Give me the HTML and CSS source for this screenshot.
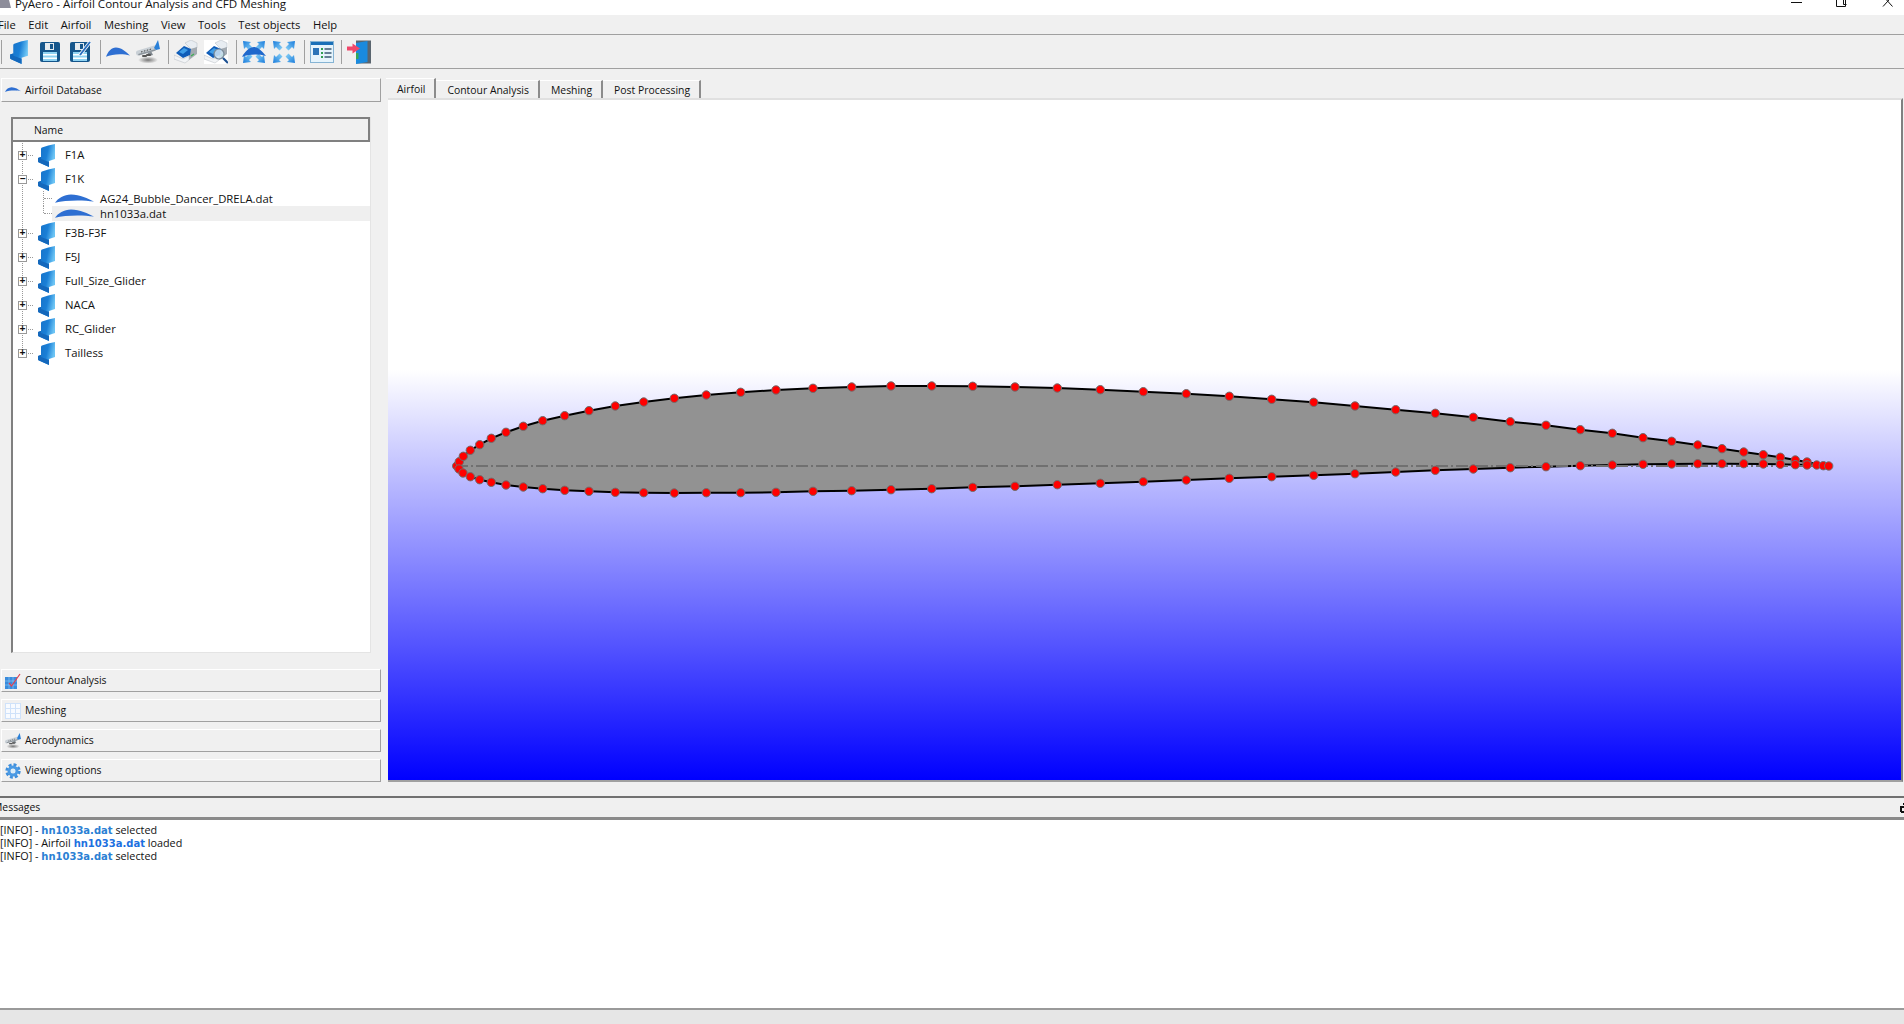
FILE: index.html
```html
<!DOCTYPE html>
<html>
<head>
    <title>PyAero - Airfoil Contour Analysis and CFD Meshing</title>
    <link rel="stylesheet" href="styles.css">
</head>
<body>
    <!-- icons used more than once -->
    <svg class="sprites">
        <defs>
            <linearGradient id="folderBlue" x1="0" x2="1" y1="0" y2="0.3">
                <stop offset="0" stop-color="#1670c6"/>
                <stop offset="0.6" stop-color="#1a7fd6"/>
                <stop offset="1" stop-color="#6cc4f4"/>
            </linearGradient>
            <linearGradient id="arrowBlue" x1="0" x2="1" y1="0" y2="1">
                <stop offset="0" stop-color="#1a7cdc"/>
                <stop offset="1" stop-color="#8fd6f8"/>
            </linearGradient>
            <radialGradient id="planeShadow">
                <stop offset="0" stop-color="#777"/>
                <stop offset="1" stop-color="#777" stop-opacity="0"/>
            </radialGradient>
            <symbol id="i-folder" viewBox="0 0 17 23">
                <path d="M0 14 L3 13 V5 Q3 4 4 3.6 Q10 1 17 0 V15 Q14 16 11 17 V23 L1 18.5 Q0 18 0 17Z" fill="url(#folderBlue)"/>
                <path d="M0 14 L3 13 V15 L11 18 V23 L1 18.5 Q0 18 0 17Z" fill="#1468bc"/>
            </symbol>
            <symbol id="i-airfoil" viewBox="0 0 39 9" preserveAspectRatio="none">
                <path d="M0 8.8 C3 4 9 0.5 16 0.4 C25 0.4 33 4.5 39 7.6 C28 5.8 10 6 0 8.8Z" fill="#2e6fd2"/>
            </symbol>
            <symbol id="i-floppy" viewBox="-2 -2 24 24">
                <rect x="0" y="0" width="20" height="20" rx="2" fill="#15568c"/>
                <rect x="5" y="1" width="9" height="7" fill="#e4ebf0"/>
                <rect x="10" y="2" width="3" height="5" fill="#15568c"/>
                <rect x="3" y="10" width="14" height="9" fill="#8ed2f2"/>
                <rect x="3" y="12" width="14" height="1.5" fill="#fff"/>
                <rect x="3" y="15.5" width="14" height="1.5" fill="#fff"/>
            </symbol>
            <symbol id="i-plane" viewBox="0 0 24 24">
                <ellipse cx="12" cy="20" rx="10" ry="3.5" fill="url(#planeShadow)"/>
                <path d="M10 10 L14 9 L17 15 L13 16Z" fill="#7f878e"/>
                <path d="M2.5 13 L19 8" stroke="#c9d0d6" stroke-width="5" stroke-linecap="round"/>
                <path d="M3 14.5 L19 10" stroke="#8d959c" stroke-width="1.5" stroke-linecap="round"/>
                <path d="M18 8 L22 0 L24 9 L20 10Z" fill="#2a80d8"/>
                <path d="M5 12 L16 8.8" stroke="#444" stroke-width="1" stroke-dasharray="1.5 1.5"/>
                <path d="M7 16 h3 M11 15 h3" stroke="#555" stroke-width="2" stroke-linecap="round"/>
            </symbol>
            <symbol id="i-printer" viewBox="0 0 24 24">
                <path d="M11 3 L17 0 L23 3 V8 L17 9Z" fill="#e8edf2" stroke="#b0b8c0" stroke-width="0.5"/>
                <path d="M17 9 L23 7 V14 L15 20 V15Z" fill="#a4abb2"/>
                <path d="M2 13 L10 6 L17 9 L16 15 L9 18Z" fill="#0f5cb8"/>
                <path d="M5 12 L10 8 L14 10 L9 14Z" fill="#3f9ee8"/>
                <path d="M0 15 L9 19 L15 16 V20 L11 23 L0 19Z" fill="#f2f4f6" stroke="#b4bac0" stroke-width="0.5"/>
                <path d="M17 16 l3 -2" stroke="#3cae50" stroke-width="1.2"/>
            </symbol>
            <symbol id="i-fit" viewBox="0 0 24 24">
                <path id="fit-arrow" d="M1 1 L9 2 L7 4 L10.5 7.5 L7.5 10.5 L4 7 L2 9Z" fill="url(#arrowBlue)"/>
                <use href="#fit-arrow" transform="matrix(-1 0 0 1 24 0)"/>
                <use href="#fit-arrow" transform="matrix(1 0 0 -1 0 24)"/>
                <use href="#fit-arrow" transform="matrix(-1 0 0 -1 24 24)"/>
            </symbol>
        </defs>
    </svg>

    <div class="titlebar">
        <svg class="app-icon" viewBox="0 0 11 15"><path d="M0 0 H9 L11 8 H0Z" fill="#8d8d9a"/></svg>
        <span class="title">PyAero - Airfoil Contour Analysis and CFD Meshing</span>
        <svg class="win-buttons" viewBox="0 0 114 15">
            <path d="M1 2.5 H12 M46.5 0 V6.5 H55.5 V0 M53.5 0 V4.5 H56.5 M93 -4 L102.5 6.5 M102.5 -4 L93 6.5" fill="none" stroke="#111" stroke-width="1"/>
        </svg>
    </div>

    <div class="menubar">
        <span>File</span>
        <span>Edit</span>
        <span>Airfoil</span>
        <span>Meshing</span>
        <span>View</span>
        <span>Tools</span>
        <span>Test objects</span>
        <span>Help</span>
    </div>

    <div class="toolbar">
        <i class="tb-sep tb-first"></i>
        <svg class="tool"><use href="#i-folder"/></svg>
        <svg class="tool"><use href="#i-floppy"/></svg>
        <svg class="tool" viewBox="0 0 24 24">
            <use href="#i-floppy" width="24" height="24"/>
            <path d="M12 15 L22 2" stroke="#fff" stroke-width="3.5"/>
            <path d="M12 15 L22 2" stroke="#2a6fc0" stroke-width="2"/>
        </svg>
        <i class="tb-sep"></i>
        <svg class="tool-foil"><use href="#i-airfoil"/></svg>
        <svg class="tool"><use href="#i-plane"/></svg>
        <i class="tb-sep"></i>
        <svg class="tool"><use href="#i-printer"/></svg>
        <svg class="tool" viewBox="0 0 24 24">
            <rect width="24" height="24" fill="#fff"/>
            <use href="#i-printer" width="24" height="24"/>
            <circle cx="15" cy="14" r="5" fill="#cfe4f4" fill-opacity="0.85" stroke="#7a8b9a" stroke-width="1.2"/>
            <path d="M19 18 L24 23" stroke="#1b4f90" stroke-width="2.2"/>
        </svg>
        <i class="tb-sep"></i>
        <svg class="tool" viewBox="0 0 24 24">
            <use href="#i-fit" width="24" height="24"/>
            <path d="M0 17 C3 11 8 7 12 7 C16 7 20 11 24 16 C16 14 8 14 0 17Z" fill="#1f68cc"/>
        </svg>
        <svg class="tool"><use href="#i-fit"/></svg>
        <i class="tb-sep"></i>
        <svg class="tool" viewBox="0 0 24 24">
            <rect x="0.5" y="1.5" width="23" height="21" fill="#e6f4fc" stroke="#86b4d4"/>
            <rect x="1" y="2" width="22" height="3" fill="#1a70b8"/>
            <rect x="3" y="8" width="6" height="7" fill="#2c74b8"/>
            <path d="M11 9 h2 M11 13 h2 M11 17 h2" stroke="#2f9e50" stroke-width="2"/>
            <path d="M14.5 9 h7 M14.5 13 h7 M14.5 17 h7" stroke="#3d5a76" stroke-width="1.4"/>
        </svg>
        <i class="tb-sep"></i>
        <svg class="tool" viewBox="0 0 24 24">
            <rect x="9" y="0.5" width="15" height="23" fill="#5a656f"/>
            <path d="M9 3 L20.5 1 V22 L9 24Z" fill="#1a8ade"/>
            <path d="M9 13 h2.5 v6 h-2.5Z" fill="#36a856"/>
            <path d="M0 6.5 H5.5 V3.5 L13 8.5 L5.5 13.5 V10.5 H0Z" fill="#f0476a"/>
        </svg>
    </div>

    <div class="main">
        <div class="sidebar">
            <div class="panel-head panel-first">
                <svg class="panel-foil"><use href="#i-airfoil"/></svg>
                <span>Airfoil Database</span>
            </div>

            <div class="tree">
                <div class="tree-head">Name</div>
                <div class="folder">
                    <i class="exp">+</i><i class="stub"></i>
                    <svg class="folder-icon"><use href="#i-folder"/></svg>
                    <span>F1A</span>
                </div>
                <div class="folder">
                    <i class="exp">&minus;</i><i class="stub"></i>
                    <svg class="folder-icon"><use href="#i-folder"/></svg>
                    <span>F1K</span>
                </div>
                <div class="child-group">
                    <div class="child">
                        <i class="child-stub"></i>
                        <div class="child-cell">
                            <svg class="child-icon"><use href="#i-airfoil"/></svg>
                            <span>AG24_Bubble_Dancer_DRELA.dat</span>
                        </div>
                    </div>
                    <div class="child child-end">
                        <i class="child-stub"></i>
                        <div class="child-cell selected">
                            <svg class="child-icon"><use href="#i-airfoil"/></svg>
                            <span>hn1033a.dat</span>
                        </div>
                    </div>
                </div>
                <div class="folder">
                    <i class="exp">+</i><i class="stub"></i>
                    <svg class="folder-icon"><use href="#i-folder"/></svg>
                    <span>F3B-F3F</span>
                </div>
                <div class="folder">
                    <i class="exp">+</i><i class="stub"></i>
                    <svg class="folder-icon"><use href="#i-folder"/></svg>
                    <span>F5J</span>
                </div>
                <div class="folder">
                    <i class="exp">+</i><i class="stub"></i>
                    <svg class="folder-icon"><use href="#i-folder"/></svg>
                    <span>Full_Size_Glider</span>
                </div>
                <div class="folder">
                    <i class="exp">+</i><i class="stub"></i>
                    <svg class="folder-icon"><use href="#i-folder"/></svg>
                    <span>NACA</span>
                </div>
                <div class="folder">
                    <i class="exp">+</i><i class="stub"></i>
                    <svg class="folder-icon"><use href="#i-folder"/></svg>
                    <span>RC_Glider</span>
                </div>
                <div class="folder folder-end">
                    <i class="exp">+</i><i class="stub"></i>
                    <svg class="folder-icon"><use href="#i-folder"/></svg>
                    <span>Tailless</span>
                </div>
            </div>

            <div class="panel-list">
                <div class="panel-head">
                    <svg class="panel-icon" viewBox="0 0 16 16">
                        <rect x="0" y="4" width="12" height="12" fill="#3a8cdc"/>
                        <path d="M0 8 h12 M0 12 h12 M4 4 v12 M8 4 v12" stroke="#8ec4f2" stroke-width="0.7"/>
                        <path d="M4 10 L6.5 13 L15 1" fill="none" stroke="#e04050" stroke-width="1.2"/>
                    </svg>
                    <span>Contour Analysis</span>
                </div>
                <div class="panel-head">
                    <svg class="panel-icon" viewBox="0 0 16 16">
                        <rect width="16" height="16" fill="#f8fbff"/>
                        <path d="M0 .5 h16 M0 5.5 h16 M0 10.5 h16 M0 15.5 h16 M.5 0 v16 M5.5 0 v16 M10.5 0 v16 M15.5 0 v16" stroke="#cfe2fa" stroke-width="1"/>
                    </svg>
                    <span>Meshing</span>
                </div>
                <div class="panel-head">
                    <svg class="panel-icon"><use href="#i-plane"/></svg>
                    <span>Aerodynamics</span>
                </div>
                <div class="panel-head">
                    <svg class="panel-icon" viewBox="0 0 24 24">
                        <circle cx="12" cy="12" r="9.5" fill="none" stroke="#3f8fdc" stroke-width="4" stroke-dasharray="4.4 3"/>
                        <circle cx="12" cy="12" r="6" fill="none" stroke="#4a9ae4" stroke-width="4.5"/>
                        <circle cx="12" cy="12" r="3" fill="#d8ecfa"/>
                    </svg>
                    <span>Viewing options</span>
                </div>
            </div>
        </div>

        <div class="workspace">
            <div class="tabs">
                <span class="tab tab-active">Airfoil</span>
                <span class="tab">Contour Analysis</span>
                <span class="tab">Meshing</span>
                <span class="tab">Post Processing</span>
            </div>
            <div class="view">
                <svg class="canvas" viewBox="388 100 1513 680">
                    <path class="contour" d="M456.7 466 459.3 461.7 463.3 456.3 470.3 450.3 479.7 444.7 491.3 438.3 506 432.3 523.3 426.3 542.7 420.7 564.7 415.7 589 410.7 615.3 406 643.7 402 674.3 398.3 706.3 395 740.7 392.3 776 390 813 388.3 851.7 387 891 386 931.7 386 972.7 386.3 1015 387 1057.3 388 1100.3 389.7 1143.3 391.7 1186.3 393.7 1229.3 396.3 1271.7 399.3 1313.7 402.3 1355 406 1395.7 409.7 1435.3 413.3 1473.3 417.3 1510.3 421.7 1546 425.3 1580.3 429.7 1612.3 433.3 1643 437.7 1671.7 441.3 1697.7 445 1722 448.7 1743.7 452 1763.3 454.7 1780.3 457.3 1795.3 460 1807 462 1816.7 464 1823.3 465.3 1828.7 466 1807 465 1795.3 464.7 1780.3 464.3 1763.3 464 1722 463.7 1697.7 463.7 1671.7 464 1643 464.3 1612.3 465 1580.3 465.7 1546 466.7 1510.3 467.7 1473.3 469 1435.3 470.3 1395.7 472 1355 473.7 1313.7 475.3 1271.7 476.7 1229.3 478.3 1186.3 480 1143.3 481.7 1100.3 483.3 1057.3 484.7 1015 486.3 972.7 487.3 931.7 488.7 891 489.7 851.7 490.7 813 491.3 776 492.3 740.7 492.7 706.3 492.7 674.3 493 643.7 492.7 615.3 492.3 589 491.3 564.7 490.3 542.7 488.7 523.3 487 506 485 491.3 482.3 479.7 479.7 470.3 476.7 463 473 459 469Z"/>
                    <path class="chord" d="M456 466 H1826"/>
                    <g class="points">
                        <circle cx="456.7" cy="466" r="3.9"/><circle cx="459.3" cy="461.7" r="3.9"/><circle cx="463.3" cy="456.3" r="3.9"/><circle cx="470.3" cy="450.3" r="3.9"/>
                        <circle cx="479.7" cy="444.7" r="3.9"/><circle cx="491.3" cy="438.3" r="3.9"/><circle cx="506" cy="432.3" r="3.9"/><circle cx="523.3" cy="426.3" r="3.9"/>
                        <circle cx="542.7" cy="420.7" r="3.9"/><circle cx="564.7" cy="415.7" r="3.9"/><circle cx="589" cy="410.7" r="3.9"/><circle cx="615.3" cy="406" r="3.9"/>
                        <circle cx="643.7" cy="402" r="3.9"/><circle cx="674.3" cy="398.3" r="3.9"/><circle cx="706.3" cy="395" r="3.9"/><circle cx="740.7" cy="392.3" r="3.9"/>
                        <circle cx="776" cy="390" r="3.9"/><circle cx="813" cy="388.3" r="3.9"/><circle cx="851.7" cy="387" r="3.9"/><circle cx="891" cy="386" r="3.9"/>
                        <circle cx="931.7" cy="386" r="3.9"/><circle cx="972.7" cy="386.3" r="3.9"/><circle cx="1015" cy="387" r="3.9"/><circle cx="1057.3" cy="388" r="3.9"/>
                        <circle cx="1100.3" cy="389.7" r="3.9"/><circle cx="1143.3" cy="391.7" r="3.9"/><circle cx="1186.3" cy="393.7" r="3.9"/><circle cx="1229.3" cy="396.3" r="3.9"/>
                        <circle cx="1271.7" cy="399.3" r="3.9"/><circle cx="1313.7" cy="402.3" r="3.9"/><circle cx="1355" cy="406" r="3.9"/><circle cx="1395.7" cy="409.7" r="3.9"/>
                        <circle cx="1435.3" cy="413.3" r="3.9"/><circle cx="1473.3" cy="417.3" r="3.9"/><circle cx="1510.3" cy="421.7" r="3.9"/><circle cx="1546" cy="425.3" r="3.9"/>
                        <circle cx="1580.3" cy="429.7" r="3.9"/><circle cx="1612.3" cy="433.3" r="3.9"/><circle cx="1643" cy="437.7" r="3.9"/><circle cx="1671.7" cy="441.3" r="3.9"/>
                        <circle cx="1697.7" cy="445" r="3.9"/><circle cx="1722" cy="448.7" r="3.9"/><circle cx="1743.7" cy="452" r="3.9"/><circle cx="1763.3" cy="454.7" r="3.9"/>
                        <circle cx="1780.3" cy="457.3" r="3.9"/><circle cx="1795.3" cy="460" r="3.9"/><circle cx="1807" cy="462" r="3.9"/>
                        <circle cx="459" cy="469" r="3.9"/><circle cx="463" cy="473" r="3.9"/><circle cx="470.3" cy="476.7" r="3.9"/><circle cx="479.7" cy="479.7" r="3.9"/>
                        <circle cx="491.3" cy="482.3" r="3.9"/><circle cx="506" cy="485" r="3.9"/><circle cx="523.3" cy="487" r="3.9"/><circle cx="542.7" cy="488.7" r="3.9"/>
                        <circle cx="564.7" cy="490.3" r="3.9"/><circle cx="589" cy="491.3" r="3.9"/><circle cx="615.3" cy="492.3" r="3.9"/><circle cx="643.7" cy="492.7" r="3.9"/>
                        <circle cx="674.3" cy="493" r="3.9"/><circle cx="706.3" cy="492.7" r="3.9"/><circle cx="740.7" cy="492.7" r="3.9"/><circle cx="776" cy="492.3" r="3.9"/>
                        <circle cx="813" cy="491.3" r="3.9"/><circle cx="851.7" cy="490.7" r="3.9"/><circle cx="891" cy="489.7" r="3.9"/><circle cx="931.7" cy="488.7" r="3.9"/>
                        <circle cx="972.7" cy="487.3" r="3.9"/><circle cx="1015" cy="486.3" r="3.9"/><circle cx="1057.3" cy="484.7" r="3.9"/><circle cx="1100.3" cy="483.3" r="3.9"/>
                        <circle cx="1143.3" cy="481.7" r="3.9"/><circle cx="1186.3" cy="480" r="3.9"/><circle cx="1229.3" cy="478.3" r="3.9"/><circle cx="1271.7" cy="476.7" r="3.9"/>
                        <circle cx="1313.7" cy="475.3" r="3.9"/><circle cx="1355" cy="473.7" r="3.9"/><circle cx="1395.7" cy="472" r="3.9"/><circle cx="1435.3" cy="470.3" r="3.9"/>
                        <circle cx="1473.3" cy="469" r="3.9"/><circle cx="1510.3" cy="467.7" r="3.9"/><circle cx="1546" cy="466.7" r="3.9"/><circle cx="1580.3" cy="465.7" r="3.9"/>
                        <circle cx="1612.3" cy="465" r="3.9"/><circle cx="1643" cy="464.3" r="3.9"/><circle cx="1671.7" cy="464" r="3.9"/><circle cx="1697.7" cy="463.7" r="3.9"/>
                        <circle cx="1722" cy="463.7" r="3.9"/><circle cx="1743.7" cy="463.7" r="3.9"/><circle cx="1763.3" cy="464" r="3.9"/><circle cx="1780.3" cy="464.3" r="3.9"/>
                        <circle cx="1795.3" cy="464.7" r="3.9"/><circle cx="1807" cy="465" r="3.9"/><circle cx="1816.7" cy="465" r="3.9"/><circle cx="1823.3" cy="465.7" r="3.9"/><circle cx="1828.7" cy="466" r="3.9"/>
                    </g>
                </svg>
            </div>
        </div>
    </div>

    <div class="messages-head">
        <span class="messages-title">Messages</span>
        <svg class="float-btn" viewBox="0 0 4 10"><path d="M1 9 V4 H4 M3 1 H4 M1 9 H4" fill="none" stroke="#111" stroke-width="2"/></svg>
    </div>
    <div class="log">
        <div class="log-line">[INFO] - <b>hn1033a.dat</b> selected</div>
        <div class="log-line">[INFO] - Airfoil <b class="loaded">hn1033a.dat</b> loaded</div>
        <div class="log-line">[INFO] - <b>hn1033a.dat</b> selected</div>
    </div>
    <div class="statusbar"></div>
</body>
</html>
```

FILE: styles.css
```css
html, body {
    margin: 0;
    height: 100%;
}
body {
    width: 1904px;
    height: 1024px;
    overflow: hidden;
    display: flex;
    flex-direction: column;
    background-color: #f0f0f0;
    color: #111;
    font-family: "Open Sans", "Liberation Sans", sans-serif;
    font-size: 10.4px;
}
.sprites {
    display: block;
    width: 0;
    height: 0;
    flex: none;
}
i {
    font-style: normal;
}

/* window frame */
.titlebar {
    flex: none;
    height: 15px;
    display: flex;
    background-color: #fff;
    overflow: hidden;
}
.app-icon {
    width: 11px;
    height: 15px;
    flex: none;
}
.title {
    margin: -5px 0 0 4px;
    font-size: 11.6px;
    line-height: 17px;
    white-space: nowrap;
}
.win-buttons {
    margin-left: auto;
    width: 114px;
    height: 15px;
    flex: none;
}
.menubar {
    flex: none;
    height: 19px;
    display: flex;
    align-items: center;
    gap: 12.6px;
    margin-left: -2px;
    border-bottom: 1px solid #a0a0a0;
    font-size: 11.2px;
}

/* toolbar */
.toolbar {
    flex: none;
    height: 33px;
    display: flex;
    align-items: center;
    gap: 6.5px;
    padding-left: 1px;
    border-bottom: 1px solid #a0a0a0;
}
.tool {
    width: 24px;
    height: 24px;
    flex: none;
}
.tool-foil {
    width: 24px;
    height: 10px;
    flex: none;
}
.tb-sep {
    width: 1px;
    height: 24px;
    flex: none;
    margin: 0 -1.5px 0 1px;
    background-color: #a0a0a0;
}
.tb-first {
    margin-left: 0;
}

/* left column */
.main {
    flex: none;
    height: 727px;
    display: flex;
}
.sidebar {
    width: 380px;
    margin-left: 1px;
    flex: none;
}
.panel-head {
    height: 21px;
    display: flex;
    align-items: center;
    gap: 4px;
    padding-left: 3px;
    border: 1px solid #fff;
    border-right-color: #a0a0a0;
    border-bottom: 1px solid #a0a0a0;
}
.panel-first {
    height: 22px;
    margin-top: 9px;
}
.panel-foil {
    width: 16px;
    height: 5px;
    margin-top: -1px;
    flex: none;
}
.panel-icon {
    width: 16px;
    height: 16px;
    flex: none;
}
.panel-list {
    margin-top: 16px;
    display: flex;
    flex-direction: column;
    gap: 7px;
}
.panel-list span {
    margin-top: -2px;
}
.tree {
    height: 535px;
    width: 357px;
    margin: 15px 0 0 10px;
    border-right: 1px solid #e4e4e4;
    border-bottom: 1px solid #e4e4e4;
    border-left: 2px solid #808080;
    background-color: #fff;
    font-size: 11.3px;
    overflow: hidden;
}
.tree-head {
    height: 21px;
    line-height: 23px;
    margin: 0 0 1px -2px;
    padding-left: 21px;
    background-color: #f0f0f0;
    border: 2px solid #808080;
    font-size: 10.4px;
}
.folder {
    height: 24px;
    display: flex;
    align-items: center;
    margin-left: 9px;
    background: repeating-linear-gradient(#999 0 1px, transparent 1px 2px) 0 0 / 1px 100% no-repeat;
}
.folder span {
    margin-top: -1px;
}
.folder-end {
    background-size: 1px 12px;
}
.exp {
    width: 7px;
    height: 7px;
    margin-left: -4px;
    flex: none;
    border: 1px solid #999;
    background-color: #fff;
    font-family: "Liberation Mono", monospace;
    font-size: 10px;
    font-weight: bold;
    line-height: 7px;
    text-align: center;
}
.stub {
    width: 5px;
    margin-left: 1px;
    flex: none;
    border-top: 1px dotted #999;
}
.folder-icon {
    width: 17px;
    height: 23px;
    margin: 0 10px 0 5px;
    flex: none;
}
.child-group {
    margin-left: 9px;
    background: repeating-linear-gradient(#999 0 1px, transparent 1px 2px) 0 0 / 1px 100% no-repeat;
}
.child {
    height: 15px;
    display: flex;
    align-items: center;
    margin-left: 21px;
    background: repeating-linear-gradient(#999 0 1px, transparent 1px 2px) 0 0 / 1px 100% no-repeat;
}
.child-end {
    background-size: 1px 8px;
}
.child-stub {
    width: 8px;
    margin-left: 1px;
    flex: none;
    border-top: 1px dotted #999;
}
.child-cell {
    flex: 1;
    height: 15px;
    display: flex;
    align-items: center;
    gap: 6px;
    padding-left: 3px;
}
.child-icon {
    width: 39px;
    height: 9px;
    flex: none;
}
.selected {
    background-color: #efefef;
}

/* right side */
.workspace {
    width: 1518px;
    margin-left: 5px;
    flex: none;
}
.tabs {
    height: 20px;
    margin-top: 9px;
    display: flex;
    align-items: flex-end;
}
.tab {
    height: 17px;
    line-height: 19px;
    padding: 0 9px 0 11px;
    border-top: 1px solid #fff;
    border-right: 2px solid #8c8c8c;
}
.tab-active {
    height: 19px;
    line-height: 20px;
}
.view {
    width: 1513px;
    height: 680px;
    margin-left: 2px;
    border-top: 2px solid #e0e0e0;
    border-right: 2px solid #808080;
    border-bottom: 2px solid #a0a0a0;
    background: linear-gradient(#fff 39.7%, #00f 100%);
}
.canvas {
    display: block;
    width: 1513px;
    height: 680px;
}
.contour {
    fill: #929292;
    stroke: #000;
    stroke-width: 2;
}
.chord {
    stroke: #707070;
    stroke-width: 2;
    stroke-dasharray: 12 3 2 3;
}
.points circle {
    r: 4.2px;
    fill: #f00;
    stroke: #6e6e6e;
    stroke-width: 1;
}

/* messages dock */
.messages-head {
    flex: none;
    height: 19px;
    display: flex;
    align-items: center;
    overflow: hidden;
    border-top: 2px solid #707070;
    border-bottom: 3px solid #8a8a8a;
}
.messages-title {
    margin: -2px 0 0 -7px;
}
.float-btn {
    margin-left: auto;
    width: 4px;
    height: 10px;
    flex: none;
}
.log {
    flex: none;
    height: 185px;
    padding-top: 3px;
    background-color: #fff;
    font-size: 10.8px;
}
.log-line {
    height: 13px;
    line-height: 13px;
}
.log b {
    color: #2b80d4;
    font-family: "DejaVu Sans", sans-serif;
    font-size: 10px;
    line-height: 1;
}
.log .loaded {
    color: #1d70e0;
}
.statusbar {
    flex: 1;
    border-top: 2px solid #9a9a9a;
    background-color: #e6e6e6;
}
```
